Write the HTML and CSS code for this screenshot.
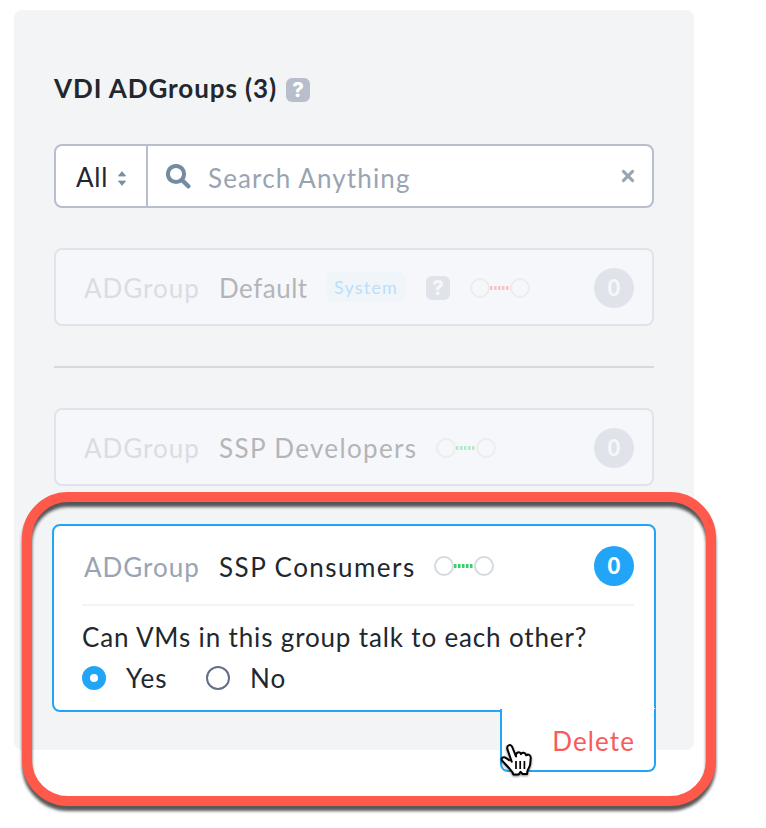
FILE: index.html
```html
<!DOCTYPE html>
<html lang="en">
<head>
<meta charset="utf-8">
<title>VDI ADGroups</title>
<link rel="stylesheet" href="styles.css">
</head>
<body>
<main class="panel">
  <header class="heading">
    <h1 class="title">VDI ADGroups (3)</h1>
    <span class="help">?</span>
  </header>

  <div class="search">
    <div class="scope">
      <span class="scope-text">All</span>
      <svg class="sorter" width="8" height="15" viewBox="0 0 8 15"><path d="M4 0.6 7.6 5H.4zM4 14.4 7.6 10H.4z" fill="#7a8fa3" stroke="#7a8fa3" stroke-width=".8" stroke-linejoin="round"/></svg>
    </div>
    <div class="field">
      <svg class="lens" width="25" height="25" viewBox="0 0 25 25" fill="none" stroke="#748ba1"><circle cx="10" cy="10" r="8.1" stroke-width="4"/><path d="M16 16l6.3 6.3" stroke-width="4.4" stroke-linecap="round"/></svg>
      <span class="placeholder">Search Anything</span>
      <svg class="clear" width="14" height="14" viewBox="0 0 14 14"><path d="M2.4 2.4l9.2 9.2m0-9.2l-9.2 9.2" stroke="#99a4b3" stroke-width="3" stroke-linecap="round"/></svg>
    </div>
  </div>

  <section class="card muted">
    <div class="row">
      <span class="kind">ADGroup</span>
      <span class="name default">Default</span>
      <span class="tag">System</span>
      <span class="help">?</span>
      <svg class="link deny" width="60" height="20" viewBox="0 0 60 20"><circle cx="10" cy="10" r="9"/><circle cx="50" cy="10" r="9"/><path d="M20 10h20"/></svg>
      <span class="count">0</span>
    </div>
  </section>

  <hr class="divider">

  <section class="card muted">
    <div class="row">
      <span class="kind">ADGroup</span>
      <span class="name developers">SSP Developers</span>
      <svg class="link" width="60" height="20" viewBox="0 0 60 20"><circle cx="10" cy="10" r="9"/><circle cx="50" cy="10" r="9"/><path d="M20 10h20"/></svg>
      <span class="count">0</span>
    </div>
  </section>

  <section class="card selected">
    <div class="row">
      <span class="kind">ADGroup</span>
      <span class="name consumers">SSP Consumers</span>
      <svg class="link" width="60" height="20" viewBox="0 0 60 20"><circle cx="10" cy="10" r="9"/><circle cx="50" cy="10" r="9"/><path d="M20 10h20"/></svg>
      <span class="count">0</span>
    </div>
    <div class="details">
      <p class="question">Can VMs in this group talk to each other?</p>
      <div class="choices">
        <span class="radio on"></span><span class="choice yes">Yes</span>
        <span class="radio"></span><span class="choice">No</span>
      </div>
    </div>
    <div class="menu"><span class="delete">Delete</span></div>
  </section>
</main>

<div class="highlight"></div>
<svg class="cursor" width="34" height="38" viewBox="0 0 34 38"><path d="M12 20.5 7.4 7.2C6.3 3.2 10.6 1.6 12.2 5L16 14.5C15.2 9.8 20 9.2 21 12.2 22 9.8 25.4 10.2 26 13.3 28.6 11.7 30.8 13.2 30.7 16L30.2 22.2C29.9 25 28 26.8 27.3 29.2L27.2 32H22.6L20.6 29.8 18.7 32.4H13.4C12.6 29 9.3 26.9 7.4 24.2L2.1 18.6C.7 16.2 3.4 14.1 6.2 16.1L9.8 18.8" fill="#fff" stroke="#000" stroke-width="2" stroke-linejoin="round"/><path d="M16 19v8m4.2-8v8m4.2-8v8" stroke="#000" stroke-width="1.7"/></svg>
</body>
</html>
```
FILE: styles.css
```css
* { box-sizing: border-box; }

body {
  margin: 0;
  width: 766px;
  height: 828px;
  overflow: hidden;
  padding: 10px 14px;
  background: #fff;
  color: #22272e;
  font: 26px/32px Lato, "Open Sans", sans-serif;
}

.panel {
  width: 680px;
  height: 740px;
  padding: 62px 40px 0;
  border-radius: 8px;
  background: #f2f4f6;
}

.heading { display: flex; align-items: center; height: 34px; }
.title { margin: 0 0 2px; width: 232px; font-size: 26px; font-weight: 700; letter-spacing: .93px; white-space: nowrap; }

.help {
  display: flex;
  align-items: center;
  justify-content: center;
  width: 24px;
  height: 24px;
  margin-top: 2px;
  border-radius: 6px;
  background: #b8becc;
  color: #fff;
  font-family: Inter, sans-serif;
  font-size: 20px;
  font-weight: 800;
}

.search {
  display: flex;
  height: 64px;
  margin-top: 38px;
  border: 2px solid #b8becc;
  border-radius: 8px;
  background: #fff;
}
.scope {
  display: flex;
  align-items: center;
  width: 92px;
  padding-left: 20px;
  border-right: 2px solid #b8becc;
}
.scope-text { width: 42px; padding-top: 2px; letter-spacing: .8px; }
.sorter { margin-top: 4px; }
.field { display: flex; flex: 1; align-items: center; padding: 0 17px 0 18px; }
.placeholder { flex: 1; margin: 4px 0 0 17px; color: #99a4b3; letter-spacing: 1.14px; }
.clear { flex: none; }

.card {
  position: relative;
  height: 78px;
  padding: 0 18px 0 28px;
  border: 2px solid #b8becc;
  border-radius: 8px;
  background: #fff;
}
.search + .card { margin-top: 40px; }
.muted { border-color: #e0e3ea; background: #f6f7fa; }
.row { display: flex; align-items: center; height: 74px; }
.kind { width: 135px; color: #99a4b3; letter-spacing: .97px; }
.kind, .name { white-space: nowrap; padding-top: 2px; }
.default { width: 107px; letter-spacing: .5px; }
.developers { width: 217px; letter-spacing: 1.36px; }
.consumers { width: 215px; letter-spacing: 1.46px; }

.tag {
  width: 80px;
  height: 30px;
  margin: -2px 20px 0 0;
  border-radius: 8px;
  background: #f0f5fa;
  color: #b9dffb;
  font-size: 18px;
  letter-spacing: 1.15px;
  line-height: 31px;
  text-align: center;
}

.link { flex: none; fill: none; stroke: #d5dae0; stroke-width: 2; }
.link path { stroke: #36d068; stroke-width: 4; stroke-dasharray: 2.5 1.5; }
.card .help + .link { margin-left: 20px; }
.count {
  width: 40px;
  height: 40px;
  margin-left: auto;
  border-radius: 50%;
  background: #22a5f7;
  color: #fff;
  font-size: 22px;
  font-weight: 900;
  line-height: 40px;
  text-align: center;
}

.muted .row { padding-top: 2px; }
.muted .kind, .muted .name { padding-top: 0; }
.muted .row { height: 76px; padding-top: 0; }
.muted .kind { color: #d9dde3; }
.muted .name { color: #b4b5b8; }
.muted .help { margin: 0; background: #e0e3ea; color: #f6f7fa; }
.muted .link { stroke: #eaecef; }
.muted .link path { stroke: #bbe9c8; }
.muted .deny path { stroke: #f7c4c4; }
.muted .count { background: #e0e3ea; color: #f6f7fa; }

.divider { height: 2px; margin: 40px 0; border: 0; background: #d3dae0; }

.selected {
  height: 188px;
  margin: 38px -2px 0;
  padding: 0 20px 0 28px;
  border-color: #22a5f7;
  border-radius: 8px 8px 0 8px;
}
.selected .row { height: 78px; padding: 2px 0 0 2px; }
.details { height: 106px; border-top: 2px solid #f2f4f6; padding-top: 15px; }
.question { margin: 0; letter-spacing: .85px; white-space: nowrap; }
.choices { display: flex; align-items: center; height: 32px; margin-top: 9px; }
.radio { width: 24px; height: 24px; margin-right: 20px; border: 2px solid #627086; border-radius: 50%; }
.on { border: 8px solid #22a5f7; }
.choice { letter-spacing: 1.1px; }
.yes { width: 80px; }

.menu {
  position: absolute;
  top: 183px;
  right: -2px;
  width: 156px;
  height: 63px;
  padding: 16px 19px 0;
  border: 2px solid #22a5f7;
  border-top: 0;
  border-radius: 0 0 8px 8px;
  background: #fff;
  text-align: right;
}
.menu::before {
  content: "";
  position: absolute;
  top: -1px;
  right: -1px;
  width: 2px;
  height: 1px;
  background: #fff;
}
.delete { color: #f85b5b; letter-spacing: 1.1px; }

.highlight {
  position: absolute;
  left: 22px;
  top: 492px;
  width: 694px;
  height: 314px;
  border: 10px solid #ff594b;
  border-radius: 46px;
  filter: drop-shadow(0 5px 1.5px rgba(0, 0, 0, .65));
}
.cursor { position: absolute; left: 500px; top: 742px; filter: drop-shadow(0 1px 1px rgba(0, 0, 0, .5)); }
```
